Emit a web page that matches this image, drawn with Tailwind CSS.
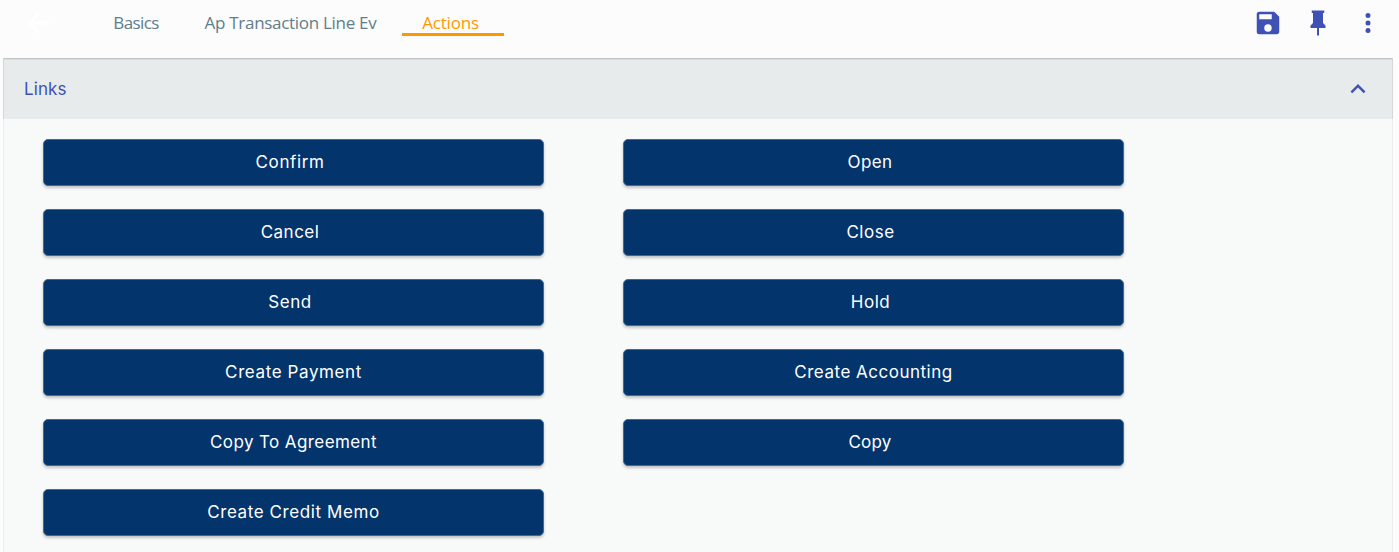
<!DOCTYPE html>
<html lang="en">
<head>
<meta charset="utf-8">
<title>Actions</title>
<script src="https://cdn.jsdelivr.net/npm/@tailwindcss/browser@4"></script>
</head>
<body class="h-[552px] overflow-hidden bg-[#fcfcfc] font-['Inter',sans-serif]">
<header class="flex h-[58px] justify-between pl-[26px] pr-[16px]">
  <div class="flex">
    <svg class="mt-[11px] size-6" viewBox="0 0 24 24" fill="none" stroke="#fff" stroke-width="3"><path d="M22.5 12H4M12.5 2.5L3.5 12l9 9.5"/></svg>
    <nav class="ml-[38px] flex h-[36px] font-['Open_Sans',sans-serif] text-[17px] leading-[45px] whitespace-nowrap text-[#607d8b]">
      <a class="w-[96px] text-center tracking-[-0.6px]">Basics</a>
      <a class="w-[213px] text-center tracking-[-0.3px]">Ap Transaction Line Ev</a>
      <a class="ml-[5px] h-[36px] w-[102px] border-b-[3px] border-[#ff9800] pr-[5px] text-center tracking-[-0.2px] text-[#ff9800]">Actions</a>
    </nav>
  </div>
  <div class="flex gap-[20px] pt-[8px] text-[#3f51b5]">
    <svg class="size-[30px]" viewBox="0 0 24 24" fill="currentColor"><path d="M17 3H5a2 2 0 0 0-2 2v14a2 2 0 0 0 2 2h14c1.100 0 2-.900 2-2V7l-4-4zm-5 16a3 3 0 1 1 0-6 3 3 0 0 1 0 6zm3-10H5V5h10v4z"/></svg>
    <svg class="size-[30px]" viewBox="0 0 24 24" fill="currentColor"><path d="M16 12V4h1V2H7v2h1v8l-2 2v2h5.200v6h1.600v-6H18v-2l-2-2z"/></svg>
    <svg class="size-[30px]" viewBox="0 0 24 24" fill="currentColor"><path d="M12 8a2 2 0 1 0 0-4 2 2 0 0 0 0 4zm0 2a2 2 0 1 0 0 4 2 2 0 0 0 0-4zm0 6a2 2 0 1 0 0 4 2 2 0 0 0 0-4z"/></svg>
  </div>
</header>
<main class="ml-[3px] h-[494px] w-[1390px] border-x border-[#eceeee] bg-[#f8faf9]">
  <div class="-mx-px flex h-[61px] items-center justify-between border-x border-t border-x-[#d5d8d8] border-t-[#c0c3c3] bg-[#e7ebeb] pl-[19px] pr-[19px] text-[#3f51b5] shadow-[inset_0_1px_0_#dadddd]">
    <h2 class="pt-px pl-px text-[17px] tracking-[0.1px]">Links</h2>
    <svg class="size-[30px]" viewBox="0 0 24 24" fill="currentColor"><path d="M12 8l-6 6 1.410 1.410L12 10.830l4.590 4.580L18 14z"/></svg>
  </div>
  <div class="grid grid-cols-[501px_501px] gap-x-[79px] gap-y-[23px] pt-[20px] pl-[39px] text-[17px] text-white *:h-[47px] *:rounded-[5px] *:border *:border-[#466a8d] *:bg-[#03356c] *:pt-px *:shadow-[0_2px_3px_rgba(0,0,0,0.22)]">
    <button class="pr-[7px] tracking-[0.6px]">Confirm</button>
    <button class="pr-[7px] tracking-[0.4px]">Open</button>
    <button class="pr-[7px] tracking-[0.5px]">Cancel</button>
    <button class="pr-[6px] tracking-[0.5px]">Close</button>
    <button class="pr-[7px] tracking-[0.6px]">Send</button>
    <button class="pr-[6px] tracking-[0.5px]">Hold</button>
    <button class="tracking-[0.6px]">Create Payment</button>
    <button class="tracking-[0.5px]">Create Accounting</button>
    <button class="tracking-[0.4px]">Copy To Agreement</button>
    <button class="pr-[7px] tracking-[0.2px]">Copy</button>
    <button class="tracking-[0.6px]">Create Credit Memo</button>
  </div>
</main>
</body>
</html>
